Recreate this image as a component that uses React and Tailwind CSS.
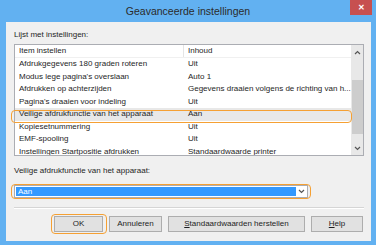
const rows = [
	["Afdrukgegevens 180 graden roteren", "Uit"],
	["Modus lege pagina's overslaan", "Auto 1"],
	["Afdrukken op achterzijden", "Gegevens draaien volgens de richting van h..."],
	["Pagina's draaien voor indeling", "Uit"],
	["Veilige afdrukfunctie van het apparaat", "Aan"],
	["Kopiesetnummering", "Uit"],
	["EMF-spooling", "Uit"],
	["Instellingen Startpositie afdrukken", "Standaardwaarde printer"],
];

const Chevron = ({ up }) => (
	<svg width="7" height="5" viewBox="0 0 7 5">
		<path
			d={up ? "M1 4 L3.5 1.5 L6 4" : "M1 1 L3.5 3.5 L6 1"}
			fill="none"
			stroke="#555"
			strokeWidth="1.2"
		/>
	</svg>
);

const Button = ({ width, children }) => (
	<div
		className={`${width} h-[16px] flex items-center justify-center border border-[#adadad] bg-[#e1e1e1] text-[8px] text-[#1e1e1e]`}
	>
		{children}
	</div>
);

export default function App() {
	return (
		<div
			className="relative w-[378px] h-[247px] bg-white overflow-hidden"
			style={{ fontFamily: '"Liberation Sans", Arial, sans-serif' }}
		>
			{/* window frame */}
			<div className="w-[376px] h-[245px] bg-[#62b1f1] flex flex-col">
				<div className="relative h-[22px] flex items-center justify-center">
					<span className="text-[10.5px] text-[#2b2b2b] mt-[2px]">
						Geavanceerde instellingen
					</span>
					<div className="absolute top-0 right-[4px] w-[22px] h-[15px] bg-[#c75050] flex items-center justify-center">
						<span className="text-white text-[8px] font-bold leading-none">✕</span>
					</div>
				</div>

				<div className="ml-[6px] mr-[5px] h-[219px] bg-[#f0f0f0] pl-[8px] pr-[7px] flex flex-col text-[#1e1e1e]">
					<div className="mt-[7px] h-[12px] flex items-center text-[8px]">
						Lijst met instellingen:
					</div>

					{/* list box */}
					<div className="mt-[3px] h-[112px] border border-[#abadb3] bg-white flex overflow-hidden">
						<div className="flex-1 flex flex-col text-[8px]">
							<div className="h-[17px] flex items-center border-b border-[#f0f0f0]">
								<div className="w-[169px] pl-[4px] border-r border-[#e5e5e5] h-full flex items-center">
									Item instellen
								</div>
								<div className="pl-[4px]">Inhoud</div>
							</div>
							{rows.map(([name, value], i) => (
								<div
									key={name}
									className={`h-[12.5px] flex items-center shrink-0 ${
										i === 4 ? "bg-[#e8e8e8]" : ""
									}`}
								>
									<div className="w-[169px] pl-[4px] whitespace-nowrap overflow-hidden">
										{name}
									</div>
									<div className="pl-[4px] whitespace-nowrap">{value}</div>
								</div>
							))}
						</div>
						<div className="w-[12px] bg-[#e8e8e8] flex flex-col items-center">
							<div className="h-[14px] flex items-center">
								<Chevron up />
							</div>
							<div className="mt-[21px] w-[11px] h-[54px] bg-[#cdcdcd]"></div>
							<div className="mt-auto h-[14px] flex items-center">
								<Chevron />
							</div>
						</div>
					</div>

					<div className="mt-[9px] h-[12px] flex items-center text-[8px]">
						Veilige afdrukfunctie van het apparaat:
					</div>

					{/* combo box */}
					<div className="mt-[8px] w-[294px] h-[13px] border border-[#abadb3] bg-white flex items-center p-[1px]">
						<div className="flex-1 h-full bg-[#3399ff] text-white text-[8px] flex items-center pl-[2px]">
							Aan
						</div>
						<div className="w-[10px] flex justify-center">
							<Chevron />
						</div>
					</div>

					<div className="mt-[9px] h-[1px] bg-[#d5d5d5]"></div>
					<div className="h-[1px] bg-white"></div>

					<div className="mt-[7px] flex justify-end gap-[6px] pr-[1px]">
						<Button width="w-[49px]">OK</Button>
						<Button width="w-[53px]">Annuleren</Button>
						<Button width="w-[137px]">
							<span>
								<span className="underline">S</span>tandaardwaarden herstellen
							</span>
						</Button>
						<Button width="w-[52px]">
							<span>
								<span className="underline">H</span>elp
							</span>
						</Button>
					</div>
				</div>
			</div>

			{/* orange annotation outlines */}
			<div className="absolute left-[11px] top-[110px] w-[341px] h-[13px] border-[1.5px] border-[#f5a033] rounded-[4px]"></div>
			<div className="absolute left-[11px] top-[184px] w-[300px] h-[15px] border-[1.5px] border-[#f5a033] rounded-[4px]"></div>
			<div className="absolute left-[51px] top-[214px] w-[56px] h-[20px] border-[1.5px] border-[#f5a033] rounded-[4px]"></div>
		</div>
	);
}
